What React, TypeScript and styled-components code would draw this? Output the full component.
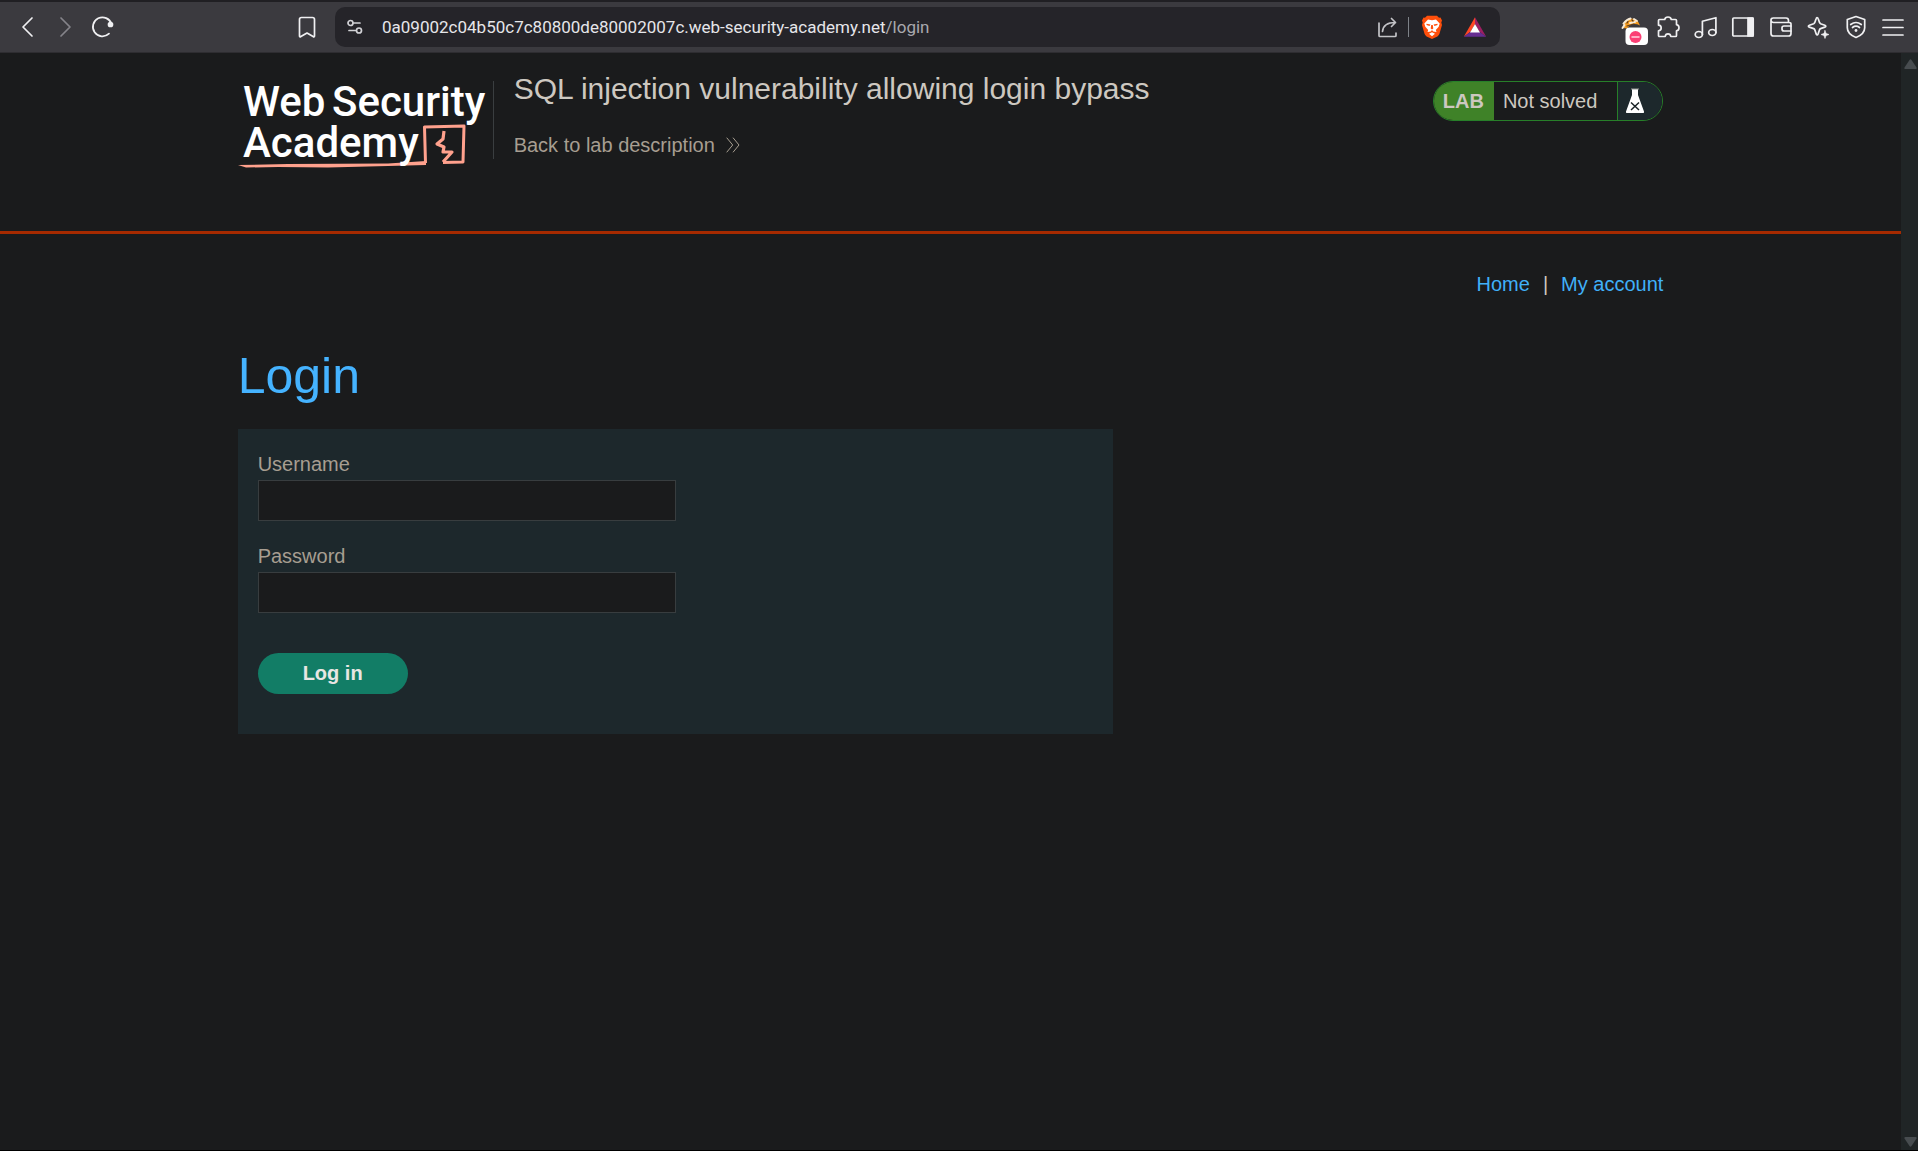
import React from "react";
import styled, { createGlobalStyle } from "styled-components";

const color = {
  page: "#1a1b1c",
  panel: "#1d282c",
  toolbar: "#3b3a3f",
  field: "#252429",
  icon: "#f0f0f2",
  title: "#cdc8c0",
  muted: "#a79e91",
  link: "#40b0f8",
  heading: "#45b3ff",
  rule: "#a52a00",
  green: "#3f8228",
  greenLine: "#277f29",
  coral: "#ffa18d",
};

const GlobalStyle = createGlobalStyle`
  *, *::before, *::after { box-sizing: border-box; }
  body {
    margin: 0;
    background: ${color.page};
    color: ${color.title};
    font-family: "Liberation Sans", Arial, sans-serif;
    font-size: 20px;
  }
`;

const Window = styled.div`
  display: flex;
  flex-direction: column;
  height: 100vh;
  border-bottom: 1px solid #000;
`;

const Toolbar = styled.header`
  display: flex;
  align-items: center;
  height: 53px;
  flex: none;
  padding: 0 13px 0 15px;
  border-top: 2px solid #201f23;
  border-bottom: 1px solid #2e2d31;
  background: ${color.toolbar};
`;

const NavButtons = styled.div`
  display: flex;
  gap: 14px;
  margin-right: 180px;
`;

const IconButton = styled.button<{ $dim?: boolean }>`
  display: flex;
  flex: none;
  width: 24px;
  height: 24px;
  padding: 0;
  border: 0;
  background: none;
  color: ${(p) => (p.$dim ? "#85848a" : color.icon)};
  cursor: pointer;
  svg {
    width: 24px;
    height: 24px;
    overflow: visible;
    fill: none;
    stroke: currentColor;
    stroke-width: 1.7;
    stroke-linecap: round;
    stroke-linejoin: round;
  }
`;

const AddressBar = styled.div`
  display: flex;
  align-items: center;
  flex: 1;
  min-width: 0;
  height: 40px;
  margin: 0 119px 0 16px;
  padding: 0 13px 0 8px;
  border-radius: 10px;
  background: ${color.field};
`;

const Address = styled.label`
  display: flex;
  align-items: center;
  flex: 1;
  min-width: 0;
  margin-left: 15px;
  font: 17px/24px Roboto, "Noto Sans", sans-serif;
  color: #a9a9ae;
`;

const HostInput = styled.input`
  field-sizing: content;
  padding: 0;
  border: 0;
  outline: 0;
  background: none;
  font: inherit;
  color: #e6e6ea;
`;

const AddressActions = styled.div`
  display: flex;
  align-items: center;
  gap: 19px;
`;

const Separator = styled.span`
  width: 1px;
  height: 20px;
  margin: 0 -8px 0 -11px;
  background: #7e8288;
`;

const Extensions = styled.div`
  display: flex;
  justify-content: space-between;
  flex: none;
  width: 286px;
`;

const Viewport = styled.div`
  display: flex;
  flex: 1;
  min-height: 0;
`;

const Page = styled.div`
  flex: 1;
  min-width: 0;
`;

const Scrollbar = styled.div`
  display: flex;
  flex-direction: column;
  justify-content: space-between;
  align-items: center;
  width: 17px;
  padding: 6px 0 3px 2px;
  background: #202526;
  svg {
    display: block;
    width: 13px;
    height: 10px;
    fill: #474c4f;
  }
`;

const Container = styled.div`
  width: 75%;
  margin: 0 auto;
`;

const LabHeader = styled.section`
  height: 181px;
  border-bottom: 3px solid ${color.rule};
`;

const HeaderRow = styled(Container)`
  display: flex;
  align-items: flex-start;
`;

const LogoLink = styled.a`
  flex: none;
  margin-top: 16px;
  padding-right: 4px;
  background: linear-gradient(#3a3e40, #3a3e40) right 12px / 1px 78px no-repeat;
  svg {
    display: block;
    width: 252px;
    height: 104px;
  }
  text {
    font: 500 42px Roboto, "Liberation Sans", sans-serif;
    fill: #fff;
  }
`;

const TitleBlock = styled.div`
  flex: 1;
  padding: 19px 0 0 20px;
`;

const LabTitle = styled.h2`
  margin: 0 0 27px;
  font-size: 30px;
  font-weight: 400;
  line-height: 34px;
`;

const BackLink = styled.a`
  display: inline-flex;
  align-items: center;
  gap: 11px;
  line-height: 24px;
  color: ${color.muted};
  text-decoration: none;
  svg {
    width: 14px;
    height: 16px;
    fill: none;
    stroke: currentColor;
  }
`;

const Badge = styled.div`
  display: flex;
  flex: none;
  height: 40px;
  margin-top: 28px;
  overflow: hidden;
  border: 1px solid ${color.greenLine};
  border-radius: 20px;
  line-height: 38px;
`;

const BadgeTag = styled.strong`
  padding: 0 10px 0 9px;
  background: ${color.green};
`;

const BadgeStatus = styled.span`
  padding: 0 20px 0 9px;
`;

const BadgeIcon = styled.span`
  display: flex;
  align-items: center;
  width: 45px;
  padding-left: 7px;
  border-left: 1px solid ${color.greenLine};
  background: ${color.panel};
`;

const AccountNav = styled.nav`
  display: flex;
  justify-content: flex-end;
  gap: 13px;
  padding-top: 38px;
  line-height: 24px;
  a {
    color: ${color.link};
    text-decoration: none;
  }
`;

const Heading = styled.h1`
  margin: 51px 0 24px;
  font-size: 50px;
  font-weight: 400;
  line-height: 58px;
  color: ${color.heading};
`;

const LoginForm = styled.form`
  max-width: 875px;
  padding: 20px 20px 40px;
  background: ${color.panel};
`;

const Field = styled.div`
  max-width: 418px;
  margin-bottom: 20px;
  label {
    display: block;
    line-height: 31px;
    color: ${color.muted};
  }
  input {
    display: block;
    width: 100%;
    height: 41px;
    padding: 0 10px;
    border: 1px solid #383d3f;
    border-radius: 0;
    outline: 0;
    background: ${color.page};
    color: ${color.title};
    font: inherit;
  }
`;

const SubmitButton = styled.button`
  display: block;
  width: 150px;
  height: 41px;
  margin-top: 40px;
  padding: 0;
  border: 0;
  border-radius: 21px;
  background: #127d66;
  color: #e8e6e3;
  font: bold 20px "Liberation Sans", Arial, sans-serif;
  cursor: pointer;
`;

type ToolProps = { label: string; dim?: boolean; children: React.ReactNode };

const Tool = ({ label, dim, children }: ToolProps) => (
  <IconButton type="button" aria-label={label} $dim={dim}>
    <svg viewBox="0 0 24 24">{children}</svg>
  </IconButton>
);

const Logo = () => (
  <svg viewBox="0 -12 252 104" role="img" aria-label="Web Security Academy">
    <text x="5" y="35">Web</text>
    <text x="94" y="35">Security</text>
    <g fill="none" stroke={color.coral} strokeLinejoin="round">
      <path d="M187.500 82 186.500 46 226 45 225 81 205 81.500" strokeWidth="3" />
      <path d="M206 50 L205 58 L199 63 L206 66 L205 71 L214 71 L205 81" strokeWidth="3.200" />
    </g>
    <path d="M0 84 L50 83 L150 82.500 L188 80 L188 84 L150 85 L90 86.500 L40 86 L8 86.500 Z" fill={color.coral} />
    <text x="5" y="76">Academy</text>
  </svg>
);

const Flask = () => (
  <svg width="20" height="26" viewBox="0 0 20 26" aria-hidden="true">
    <path d="M7 1h6v6l6 16.500q.5 1.500-1 1.500H2q-1.500 0-1-1.500L7 7Z" fill="#fff" />
    <path d="M6 1h8" stroke="#9a9a98" />
    <path d="m6 14.500 8 7.500m0-7.500L6 22" stroke="#1a2326" strokeWidth="1.500" />
  </svg>
);

export default function App() {
  return (
    <Window>
      <GlobalStyle />
      <Toolbar>
        <NavButtons>
          <Tool label="Back"><path d="M17 3 8 12l9 9" /></Tool>
          <Tool label="Forward" dim><path d="m8 3 9 9-9 9" /></Tool>
          <Tool label="Reload">
            <path d="M20.500 9A9.500 9.500 0 1 0 18 18.700" />
            <circle cx="19.500" cy="9.500" r="2" fill="currentColor" />
          </Tool>
        </NavButtons>
        <Tool label="Bookmark">
          <path d="M4.500 4.500a2 2 0 0 1 2-2h11a2 2 0 0 1 2 2v16.300q0 1.700-1.400.7L12 18l-6.100 3.500q-1.400 1-1.400-.7Z" />
        </Tool>
        <AddressBar>
          <Tool label="Site information">
            <g stroke="#d2d2d6">
              <circle cx="7.500" cy="8" r="2.500" />
              <path d="M10.500 8H17M6 15.500h6.500" />
              <circle cx="16" cy="15.500" r="2.500" />
            </g>
          </Tool>
          <Address>
            <HostInput
              type="text"
              aria-label="Address"
              spellCheck={false}
              defaultValue="0a09002c04b50c7c80800de80002007c.web-security-academy.net"
            />
            <span>/login</span>
          </Address>
          <AddressActions>
            <Tool label="Share">
              <g stroke="#c3c3c7">
                <path d="M3 8v12.500q0 1 1 1h15q1 0 1-1V18" />
                <path d="M6.500 16.500C7 10.500 11 7.500 19.500 7.500M15.500 3.500l4 4-4 4" />
              </g>
            </Tool>
            <Separator />
            <Tool label="Brave Shields">
              <g stroke="none">
                <path d="M7 .8h10l2 2 1.500-.2 1.500 3-.7 2 .7 2.400-2.600 9q-.6 1.500-2 2.400L12 24l-5.400-2.600q-1.400-.9-2-2.400L2 10l.7-2.400-.7-2 1.500-3 1.500.2Z" fill="#ff4f0b" />
                <path d="M8 4.500 12 5.300l4-.8 3.700 4-1 3.300-2.900 3.300.7 2-3.300-.5-1.200-1.500-1.200 1.500-3.300.5.7-2-2.900-3.300-1-3.300ZM12 17.200l3 1.600-3 2.500-3-2.500Z" fill="#fff" />
                <path d="m6.500 8.800 4 .8-1 1.500-3-1.200Zm11 0-4 .8 1 1.500 3-1.200ZM11.200 10h1.600l.5 3.500-1.300.9-1.300-.9Z" fill="#ff4f0b" />
              </g>
            </Tool>
            <Tool label="Brave Rewards">
              <g stroke="none">
                <path d="M12 2.300V9L7.500 16.800.8 21.700Z" fill="#ff4724" />
                <path d="M12 2.300V9l4.500 7.800 6.700 4.900Z" fill="#9e1f63" />
                <path d="M.8 21.700 7.500 16.800h9l6.700 4.900Z" fill="#662d91" />
                <path d="m12 9 5 8.500H7Z" fill="#fff" />
              </g>
            </Tool>
          </AddressActions>
        </AddressBar>
        <Extensions>
          <Tool label="Cookie extension">
            <path d="M4 13Q4 3.500 12 3.500q7 0 9 7-8-4-13 3Z" fill="#f39a1f" stroke="none" />
            <path d="M4.500 8.500q3-4 7-5M3.500 13l2-3M11 8l5-1M15 4l3 2" stroke="#f5ead8" strokeWidth="2" />
            <path d="M9 6.500 8 8m5-3 1 1M8 11l7-2" stroke="#5a3b1e" strokeWidth="1.200" />
            <rect x="6.500" y="12.500" width="22.500" height="17.500" rx="4" fill="#fff" stroke="none" />
            <circle cx="16.500" cy="22" r="6" fill="#fb3f75" stroke="none" />
            <path d="M13 22h7" stroke="#ffd3df" strokeWidth="1.500" />
          </Tool>
          <Tool label="Extensions">
            <path d="M3.500 4.500h5.200q.5-2.500 3.300-2.500t3.300 2.500h4.200q1 0 1 1v4.200q2.500.5 2.500 3.100t-2.500 3.100v4.600q0 1-1 1h-4.700q-.3-2.700-2.800-2.700T9.200 21.500H3.500q-1 0-1-1v-4.700q2.700-.3 2.700-2.800T2.500 10.200V5.500q0-1 1-1Z" />
          </Tool>
          <Tool label="Playlist">
            <ellipse cx="4.800" cy="19.500" rx="3.600" ry="3" />
            <ellipse cx="18.300" cy="17.500" rx="3.600" ry="3" />
            <path d="M8.400 19.500V6.300l13.500-3.600v14.800" />
          </Tool>
          <Tool label="Sidebar">
            <rect x="1.800" y="3" width="20.400" height="18" rx="1" />
            <path d="M17 3h5v18h-5Z" fill="currentColor" />
          </Tool>
          <Tool label="Wallet">
            <path d="M2 4.500v14q0 2.500 2.500 2.500h15q2.500 0 2.500-2.500V9q0-1.500-2-1.500H4.500Q2 7.500 2 5.200T4.500 3H17q2.500 0 2.500 2.500v2" />
            <path d="M22 11h-7q-2 0-2 2v1q0 2 2 2h7" />
          </Tool>
          <Tool label="Leo assistant">
            <path d="M11 2.500q.8 0 1.100 1l1.500 4.200q.3.700 1 1l4.200 1.600q2 .9 0 1.800l-4.200 1.500q-.7.300-1 1L12.100 19q-.9 2-1.900 0l-1.500-4.400q-.3-.7-1-1l-4.300-1.500q-2-.9 0-1.800l4.300-1.600q.7-.3 1-1l1.500-4.200q.3-1 .8-1Z" />
            <path d="m19 15.500 1.100 2.900 2.900 1.100-2.900 1.100L19 23.500l-1.100-2.900-2.900-1.100 2.900-1.100Z" fill="currentColor" strokeWidth=".6" />
          </Tool>
          <Tool label="VPN">
            <path d="m12 1.500 8.700 3v8.200q0 6.300-8.700 9.800-8.700-3.500-8.700-9.800V4.500Z" />
            <path d="M6.700 9.500q5.300-4 10.600 0M8.500 12.500q3.500-2.600 7 0" />
            <circle cx="12" cy="15.500" r="1.400" fill="currentColor" stroke="none" />
          </Tool>
          <Tool label="Menu"><path d="M2 5h20M2 12.500h20M2 20h20" /></Tool>
        </Extensions>
      </Toolbar>

      <Viewport>
        <Page>
          <LabHeader>
            <HeaderRow>
              <LogoLink href="#academy"><Logo /></LogoLink>
              <TitleBlock>
                <LabTitle>SQL injection vulnerability allowing login bypass</LabTitle>
                <BackLink href="#description">
                  Back to lab description
                  <svg viewBox="0 0 14 16" aria-hidden="true"><path d="m.7.700 6 7.300-6 7.300M7 .7 13 8l-6 7.300" /></svg>
                </BackLink>
              </TitleBlock>
              <Badge>
                <BadgeTag>LAB</BadgeTag>
                <BadgeStatus>Not solved</BadgeStatus>
                <BadgeIcon><Flask /></BadgeIcon>
              </Badge>
            </HeaderRow>
          </LabHeader>
          <Container as="main">
            <AccountNav>
              <a href="#home">Home</a>
              <span>|</span>
              <a href="#my-account">My account</a>
            </AccountNav>
            <Heading>Login</Heading>
            <LoginForm onSubmit={(e) => e.preventDefault()}>
              <Field>
                <label htmlFor="username">Username</label>
                <input id="username" name="username" type="text" />
              </Field>
              <Field>
                <label htmlFor="password">Password</label>
                <input id="password" name="password" type="password" />
              </Field>
              <SubmitButton type="submit">Log in</SubmitButton>
            </LoginForm>
          </Container>
        </Page>
        <Scrollbar aria-hidden="true">
          <svg viewBox="0 0 13 10"><path d="M5.500 1q1-1.300 2 0l5 7.500q.5 1.500-1 1.500h-10Q0 10 .5 8.500Z" /></svg>
          <svg viewBox="0 0 13 10"><path d="M5.500 9q1 1.300 2 0l5-7.500Q13 0 11.500 0h-10Q0 0 .5 1.500Z" /></svg>
        </Scrollbar>
      </Viewport>
    </Window>
  );
}
